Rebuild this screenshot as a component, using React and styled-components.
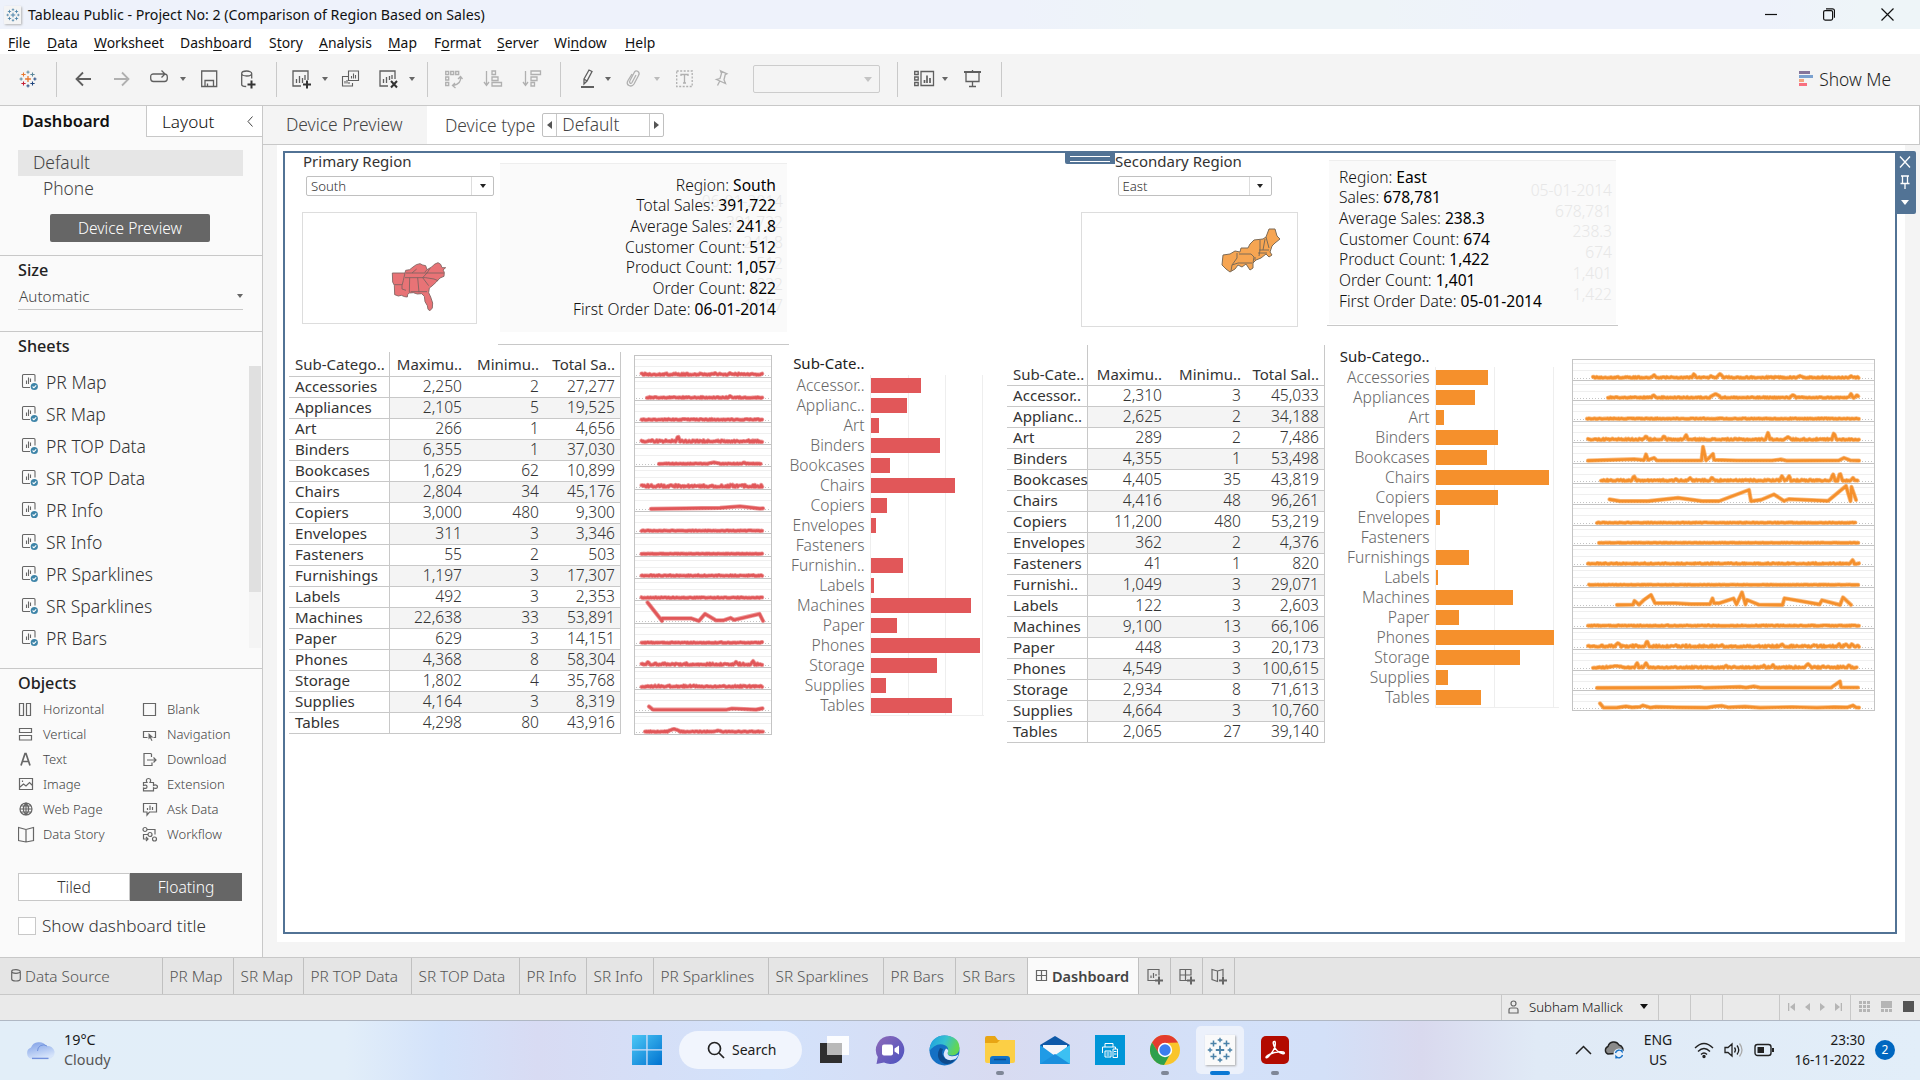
import React from "react";
import styled, { createGlobalStyle, css } from "styled-components";

const RED = "#e15759";
const ORANGE = "#f5902c";
const BLUE = "#527395";

const GlobalStyle = createGlobalStyle`
  * { box-sizing: border-box; }
  html, body { margin: 0; padding: 0; }
  body {
    width: 1920px; height: 1080px; overflow: hidden;
    font-family: "Noto Sans", "Open Sans", sans-serif;
    font-weight: 300; color: #333; background: #fff; white-space: nowrap;
  }
  svg { display: block; flex: none; }
`;

const Screen = styled.div`
  width: 1920px; height: 1080px; display: flex; flex-direction: column; overflow: hidden;
`;

/* ---------- window chrome ---------- */
const TitleBar = styled.header`
  height: 29px; display: flex; align-items: center; padding: 0 26px 0 4px; flex: none;
  background: linear-gradient(90deg, #eef2fb 0 53%, #eef4f8 60% 72%, #eef2fb 80% 92%, #eef5f8 97%);
`;
const AppTile = styled.span`
  width: 17px; height: 18px; display: grid; place-items: center; background: #f4f4f4;
  box-shadow: 1px 1px 2px #b5b5b5; margin-right: 7px;
`;
const WindowTitle = styled.h1`
  margin: 0; font-size: 14.2px; font-weight: 400; color: #111; flex: 1; line-height: 28px;
`;
const WindowButtons = styled.div`
  display: flex; gap: 46px; align-items: center;
`;
const MenuBar = styled.nav`
  height: 25px; display: flex; align-items: center; gap: 16px; padding: 2px 0 0 8px; background: #fff;
  font-size: 13.9px; font-weight: 400; color: #111; flex: none; line-height: 26px;
`;
const MenuItem = styled.span`
  width: ${(p) => p.$w}px;
  u { text-underline-offset: 2px; }
`;

/* ---------- toolbar ---------- */
const Toolbar = styled.div`
  height: 52px; display: flex; align-items: center; background: #f4f4f4; border-bottom: 1px solid #c8c8c8; flex: none;
  padding-bottom: 1px;
`;
const Tool = styled.span`
  width: ${(p) => p.$w}px; margin-left: ${(p) => p.$gap}px; height: 18px; color: #5f5f5f; flex: none;
  opacity: ${(p) => (p.$off ? 0.45 : 1)};
  svg { overflow: visible; fill: none; stroke: currentColor; stroke-width: 1.3; }
`;
const ToolRule = styled.span`
  width: 1px; height: 35px; background: #c9c9c9; margin-left: ${(p) => p.$gap}px; flex: none;
`;
const Caret = styled.span`
  width: 0; height: 0; flex: none; margin-left: ${(p) => p.$gap || 0}px;
  border: ${(p) => p.$s || 3}px solid transparent; border-top: ${(p) => (p.$s || 3) + 1}px solid ${(p) => p.$c || "#666"}; border-bottom: 0;
`;
const SearchCombo = styled.span`
  width: 127px; height: 28px; margin-left: 25px; border: 1px solid #ccc; border-radius: 2px; flex: none;
  display: flex; align-items: center; justify-content: flex-end; padding-right: 7px;
`;
const ShowMe = styled.span`
  margin-left: auto; margin-right: 29px; display: flex; gap: 6px; align-items: center; font-size: 17.4px; line-height: 22px; color: #222;
`;

/* ---------- body ---------- */
const Body = styled.div`
  height: 851px; display: flex; flex: none;
`;
const SidePanel = styled.aside`
  width: 263px; display: flex; flex-direction: column; background: #fafafa; border-right: 1px solid #c8c8c8; flex: none;
`;
const PanelTabs = styled.div`
  height: 31px; display: flex; flex: none;
`;
const PanelTab = styled.div`
  display: flex; align-items: center; justify-content: space-between; color: #111;
  ${(p) => p.$active
    ? css`width: 146px; padding-left: 22px; font-weight: 600; font-size: 16.5px; line-height: 28px; padding-bottom: 2px;`
    : css`flex: 1; padding: 1px 9px 0 15px; font-size: 17.2px; line-height: 30px; background: #fff; border: solid #c8c8c8; border-width: 0 0 1px 1px;`}
`;
const DeviceList = styled.div`
  height: 119px; padding: 13px 19px 0 18px; border-bottom: 1px solid #c8c8c8; font-size: 17.4px; flex: none; color: #444;
`;
const Device = styled.div`
  height: 26px; line-height: 25px; padding-left: ${(p) => (p.$active ? 15 : 25)}px;
  background: ${(p) => (p.$active ? "#e6e6e6" : "transparent")};
`;
const PreviewButton = styled.button`
  display: block; width: 160px; height: 28px; margin: 12px 0 0 32px; border: 0; border-radius: 2px; background: #666;
  color: #fff; font: 300 15.5px/27px "Noto Sans", sans-serif; padding: 0;
`;
const PanelSection = styled.section`
  height: ${(p) => p.$h}px; padding: 4px 19px 0 18px; flex: none;
  border-bottom: ${(p) => (p.$last ? 0 : 1)}px solid #c8c8c8;
`;
const SectionTitle = styled.h2`
  margin: 0; font-size: 16.2px; font-weight: 500; line-height: 20px; height: 20px; color: #222;
`;
const SizeSelect = styled.div`
  height: 30px; display: flex; align-items: center; justify-content: space-between; border-bottom: 1px solid #c8c8c8;
  font-size: 15.3px; padding-left: 1px; padding-top: 3px; color: #444;
`;
const SheetScroller = styled.div`
  display: flex; justify-content: space-between; margin: 10px -18px 0 3px; height: 282px;
`;
const SheetList = styled.ul`
  list-style: none; margin: 0; padding: 0;
`;
const SheetRow = styled.li`
  height: 32px; display: flex; align-items: center; gap: 8px; font-size: 17.55px; color: #333; line-height: 30px; padding-bottom: 1px;
`;
const ScrollTrack = styled.div`
  width: 12px; background: #f4f4f4;
`;
const ScrollThumb = styled.div`
  height: 226px; background: #e0e0e0;
`;
const ObjectGrid = styled.div`
  display: grid; grid-template-columns: 124px 1fr; grid-auto-rows: 25px; margin-top: 4px; font-size: 13.05px; color: #444;
`;
const ObjectItem = styled.div`
  display: flex; align-items: center; gap: 8px; line-height: 25px;
  svg { fill: none; stroke: #666; stroke-width: 1.2; }
`;
const LayoutToggle = styled.div`
  display: flex; width: 224px; height: 28px; margin-top: 26px; font-size: 15.6px; text-align: center; line-height: 27px;
`;
const ToggleHalf = styled.span`
  flex: 1; border: 1px solid ${(p) => (p.$on ? "#666" : "#c8c8c8")}; background: ${(p) => (p.$on ? "#666" : "#fff")};
  color: ${(p) => (p.$on ? "#fff" : "#333")};
`;
const TitleCheck = styled.label`
  display: flex; align-items: center; gap: 6px; margin-top: 12px; font-size: 17.15px; line-height: 26px; color: #333;
`;
const Box = styled.span`
  width: 18px; height: 18px; border: 1px solid #c8c8c8; background: #fff;
`;

const Workspace = styled.main`
  flex: 1; display: flex; flex-direction: column; background: #f4f4f4;
`;
const DeviceBar = styled.div`
  height: 39px; display: flex; align-items: center; background: #fff; border-bottom: 1px solid #c8c8c8;
  border-right: 1px solid #c8c8c8; font-size: 17.4px; color: #444; flex: none; line-height: 36px;
`;
const DevicePreviewTab = styled.span`
  width: 164px; height: 38px; background: #f4f4f4; padding-left: 23px; margin-right: 18px;
`;
const Stepper = styled.div`
  display: flex; width: 122px; height: 24px; margin-left: 7px; border: 1px solid #c0c0c0; border-radius: 2px; line-height: 20px;
`;
const StepButton = styled.span`
  width: 14px; display: grid; place-items: center; border: solid #c8c8c8; border-width: ${(p) => (p.$left ? "0 1px 0 0" : "0 0 0 1px")};
  &::before {
    content: ""; border: 4px solid transparent;
    ${(p) => (p.$left ? "border-left: 0; border-right: 5px solid #555;" : "border-right: 0; border-left: 5px solid #555;")}
  }
`;
const StepValue = styled.span`
  flex: 1; padding-left: 5px;
`;

const Page = styled.div`
  width: 1628px; height: 797px; margin-left: 14px; padding: 6px 8px 8px 6px; background: #fff;
`;
const Frame = styled.div`
  position: relative; width: 1614px; height: 783px; border: 2px solid ${BLUE}; display: flex;
`;
const Handle = styled.div`
  position: absolute; left: 780px; top: -1px; width: 50px; height: 12px; background: ${BLUE};
  display: flex; flex-direction: column; justify-content: center; gap: 4px; padding: 1px 5px 0;
  border-radius: 0 0 0 2px;
`;
const Grip = styled.i`
  height: 1px; background: #fff;
`;
const FrameActions = styled.div`
  position: absolute; right: -21px; top: -2px; width: 21px; height: 63px; background: ${BLUE};
  display: flex; flex-direction: column; align-items: center; padding: 4px 2px 0 0; gap: 6px; border-radius: 0 2px 2px 0;
  svg { fill: none; stroke: #fff; stroke-width: 1.3; }
`;

/* ---------- dashboard content ---------- */
const Region = styled.section`
  width: ${(p) => p.$w}px; flex: none; display: flex; flex-direction: column;
`;
const TopRow = styled.div`
  height: ${(p) => p.$h}px; padding-left: ${(p) => p.$left}px; display: flex; align-items: flex-start; flex: none;
`;
const FilterColumn = styled.div`
  width: ${(p) => p.$w}px; display: flex; flex-direction: column;
`;
const FilterTitle = styled.h3`
  margin: 0 0 5px; padding-left: ${(p) => p.$left}px; font-size: 15px; font-weight: 400; line-height: 16px; height: 18px; color: #333;
`;
const Filter = styled.div`
  width: ${(p) => p.$w}px; height: 20px; margin-left: ${(p) => p.$left}px; border: 1px solid #c0c0c0; border-radius: 2px; display: flex;
  justify-content: space-between; padding-left: 4px; font-size: 13.2px; line-height: 18px; color: #333;
`;
const FilterArrow = styled.span`
  width: 22px; border-left: 1px solid #ddd; display: grid; place-items: center;
`;
const MapBox = styled.div`
  width: ${(p) => p.$w}px; height: ${(p) => p.$h}px; margin-top: 16px; border: 1px solid #ddd;
  svg { margin: -1px; }
`;
const InfoWrap = styled.div`
  width: 291px; height: ${(p) => p.$h}px; margin: ${(p) => p.$top}px 0 0 ${(p) => p.$left}px; padding: 0 2px; border-bottom: 1px solid #c8c8c8;
`;
const InfoCard = styled.div`
  height: ${(p) => p.$h}px; background: #fafafa; position: relative; border-top: 1px solid #eee;
  padding: ${(p) => p.$pad}; text-align: ${(p) => p.$align}; font-size: 15.6px; line-height: 20.7px; color: #111;
  b { font-weight: 400; color: #000; }
`;
const Ghosts = styled.div`
  position: absolute; right: 4px; top: ${(p) => p.$top}px; text-align: right; color: #e7e7e7;
`;
const InfoLines = styled.div`
  position: relative;
`;
const BottomRow = styled.div`
  display: flex; align-items: flex-start; padding-left: ${(p) => p.$left}px;
`;

const Table = styled.div`
  width: ${(p) => p.$w}px; display: grid; grid-template-columns: ${(p) => p.$cols}; grid-template-rows: ${(p) => p.$head}px; grid-auto-rows: 21px;
  border-right: 1px solid #c8c8c8; font-size: 15.6px;
`;
const Cell = styled.span`
  border-bottom: 1px solid #c8c8c8; text-align: right; line-height: 19px; color: #333;
  background: ${(p) => (p.$shade ? "#f4f4f4" : "transparent")};
  padding-right: ${(p) => (p.$last ? 5 : 0)}px;
`;
const RowName = styled(Cell)`
  text-align: left; padding-left: 6px; border-right: 1px solid #c8c8c8; font-weight: 400; font-size: 15.1px; background: transparent;
`;
const HeadCell = styled(Cell)`
  font-weight: 400; font-size: 15px; display: flex; align-items: flex-end; justify-content: flex-end; line-height: 22px;
  padding-bottom: ${(p) => p.$lift}px;
`;
const HeadName = styled(HeadCell)`
  justify-content: flex-start; padding-left: 6px; border-right: 1px solid #c8c8c8;
`;

const BarChart = styled.div`
  margin-left: ${(p) => p.$left}px; display: flex; flex-direction: column; font-size: 15.6px;
`;
const BarHeader = styled.div`
  height: ${(p) => p.$h}px; width: ${(p) => p.$w}px; text-align: right; line-height: 23px; font-size: 15px; font-weight: 400; color: #222;
`;
const BarBody = styled.div`
  display: flex; gap: 5px;
`;
const BarLabels = styled.div`
  width: ${(p) => p.$w}px; padding-top: 1px; text-align: right; color: #666;
`;
const BarLabel = styled.div`
  height: 20px; line-height: 19px;
`;
const Plot = styled.div`
  width: ${(p) => p.$w}px; height: 341px; padding-top: 3px; border-bottom: 1px solid #eee;
  background:
    linear-gradient(#eee, #eee) 0 0 / 1px 100% no-repeat,
    linear-gradient(#eee, #eee) ${(p) => p.$lines[0]}px 0 / 1px 100% no-repeat,
    linear-gradient(#eee, #eee) ${(p) => p.$lines[1]}px 0 / 1px 100% no-repeat,
    linear-gradient(#eee, #eee) ${(p) => p.$lines[2]}px 0 / 1px 100% no-repeat;
  padding-left: 1px;
`;
const Bar = styled.div`
  height: 15px; margin-bottom: 5px; background: ${(p) => p.$color};
`;
const SparkBox = styled.div`
  margin: ${(p) => p.$top}px 0 0 ${(p) => p.$left}px;
`;

/* ---------- bottom strips ---------- */
const SheetTabs = styled.div`
  height: 38px; display: flex; background: #e5e5e5; border: solid #c8c8c8; border-width: 1px 0; flex: none;
  font-size: 15.35px; color: #555; line-height: 37px;
`;
const SheetTab = styled.div`
  width: ${(p) => p.$w}px; padding-left: ${(p) => (p.$icon ? 8 : 6.5)}px; border-right: 1px solid #c0c0c0; display: flex; align-items: center; gap: 5px;
  ${(p) => p.$source && css`padding-left: 11px; gap: 4px; svg { margin-top: -2px; }`}
  ${(p) => p.$active && css`background: #fafafa; font-weight: 600; font-size: 14.5px; color: #444; padding-left: 8px; line-height: 33px; svg { margin-top: -2px; }`}
  svg { fill: none; stroke: #666; stroke-width: 1.2; overflow: visible; }
`;
const StatusBar = styled.div`
  height: 26px; display: flex; justify-content: flex-end; background: #eaeaea; border-bottom: 1px solid #b0b8c4; flex: none;
`;
const StatusCell = styled.div`
  width: ${(p) => p.$w}px; border-left: 1px solid #c8c8c8; display: flex; align-items: center; gap: ${(p) => p.$gap || 0}px;
  padding: 0 0 2px ${(p) => p.$pad || 0}px; font-size: 13.2px; color: #111; line-height: 22px;
`;
const Taskbar = styled.footer`
  height: 60px; display: flex; align-items: center; flex: none; padding-bottom: 2px;
  background: linear-gradient(90deg, #e2eef8 0%, #e2eef9 18%, #d3e2fa 23%, #d8dbf3 28%, #d5dff7 34%, #d3e2fb 40%, #d8dbf1 52%, #d3e1f9 64%, #d3e0f8 69%, #d9d9ee 74%, #e0eaf6 80%, #e2eef9 100%);
  font-size: 13.5px; font-weight: 400; color: #1a1a1a; line-height: 20px;
`;
const Weather = styled.div`
  display: flex; align-items: center; gap: 9px; padding-left: 25px; width: 619px; font-size: 14.4px;
  span { color: #555; }
`;
const AppButton = styled.div`
  width: 55px; height: 60px; display: flex; align-items: center; justify-content: center; position: relative;
  &::after {
    content: ""; position: absolute; bottom: 5px; height: 4px; border-radius: 2px;
    width: ${(p) => (p.$mark === "active" ? 20 : p.$mark ? 8 : 0)}px;
    background: ${(p) => (p.$mark === "active" ? "#0a78d4" : "#7f8797")};
  }
`;
const SearchPill = styled.div`
  width: 123px; height: 38px; border-radius: 19px; background: #f1f5fd; display: flex; align-items: center; gap: 7px; padding-left: 28px;
  font-size: 14px; margin: 0 5px;
`;
const ActiveTile = styled.div`
  width: 48px; height: 48px; border-radius: 5px; background: #ecf1fb; display: grid; place-items: center;
`;
const WhiteTile = styled.div`
  width: 30px; height: 30px; background: #fafafa; display: grid; place-items: center; box-shadow: 1px 1px 2px #aaa;
`;
const Tray = styled.div`
  margin-left: auto; padding-right: 25px; display: flex; align-items: center; gap: 12px;
`;
const Lang = styled.div`
  width: 40px; margin: 0 4px 0 0; text-align: center; font-size: 14px;
`;
const TrayIcons = styled.div`
  display: flex; gap: 10px;
`;
const Clock = styled.div`
  width: 78px; text-align: right; margin-right: -2px;
`;
const Badge = styled.div`
  width: 20px; height: 20px; border-radius: 50%; background: #0067c0; color: #fff; text-align: center; line-height: 19px; font-size: 12px;
`;

/* ---------- data ---------- */
const NAMES = ["Accessories", "Appliances", "Art", "Binders", "Bookcases", "Chairs", "Copiers", "Envelopes", "Fasteners", "Furnishings", "Labels", "Machines", "Paper", "Phones", "Storage", "Supplies", "Tables"];
const withShort = (map) => NAMES.map((n) => map[n] || n);

const SOUTH_ROWS = [
  ["2,250", "2", "27,277"], ["2,105", "5", "19,525"], ["266", "1", "4,656"], ["6,355", "1", "37,030"], ["1,629", "62", "10,899"],
  ["2,804", "34", "45,176"], ["3,000", "480", "9,300"], ["311", "3", "3,346"], ["55", "2", "503"], ["1,197", "3", "17,307"],
  ["492", "3", "2,353"], ["22,638", "33", "53,891"], ["629", "3", "14,151"], ["4,368", "8", "58,304"], ["1,802", "4", "35,768"],
  ["4,164", "3", "8,319"], ["4,298", "80", "43,916"],
];
const EAST_ROWS = [
  ["2,310", "3", "45,033"], ["2,625", "2", "34,188"], ["289", "2", "7,486"], ["4,355", "1", "53,498"], ["4,405", "35", "43,819"],
  ["4,416", "48", "96,261"], ["11,200", "480", "53,219"], ["362", "2", "4,376"], ["41", "1", "820"], ["1,049", "3", "29,071"],
  ["122", "3", "2,603"], ["9,100", "13", "66,106"], ["448", "3", "20,173"], ["4,549", "3", "100,615"], ["2,934", "8", "71,613"],
  ["4,664", "3", "10,760"], ["2,065", "27", "39,140"],
];
const SOUTH_BARS = [50, 36, 8, 69, 19, 84, 16, 5, 0, 32, 3, 100, 26, 109, 66, 15, 81];
const EAST_BARS = [52, 39, 8, 62, 51, 113, 62, 4, 0, 33, 2, 77, 23, 118, 84, 12, 45];

/* s: first x, e: last x, n: jitter, k: spikes [x, height, half width], p: explicit points [x, height] */
const SOUTH_LINES = [
  { s: 7.5, e: 129, n: 0.8, k: [[81, 2], [96, 2]] }, { s: 13, e: 129, n: 0.5, k: [[96, 2]] }, { s: 7.5, e: 129, n: 0.5 },
  { s: 7.5, e: 129, n: 0.9, k: [[18, 2], [44, 6, 1.5]] }, { s: 25, e: 127, n: 0.3, k: [[80, 1.5, 6], [110, 1.5]] },
  { s: 7.5, e: 129, n: 1.1, k: [[8, 2], [37, 2], [108, 2]] },
  { p: [[17, 0], [86, 1], [106, 2.6], [126, 0.3], [129, 0.6]] }, { s: 7.5, e: 129, n: 0.3 }, { s: 7.5, e: 129, n: 0.2 },
  { s: 7.5, e: 129, n: 0.5 }, { s: 7.5, e: 129, n: 0.4 },
  { p: [[13.5, 18.5], [28, 0], [28.3, 2.5], [57.5, 2.5], [65, 0], [71, 7], [82, 0.5], [89, 0.5], [96.5, 3], [100, 1], [125.5, 7], [129, 0]] },
  { s: 7.5, e: 129, n: 0.4 }, { s: 7.5, e: 129, n: 0.9, k: [[14, 3], [102, 3], [119, 4]] }, { s: 7.5, e: 129, n: 0.8 },
  { p: [[15, 3.4], [19, 0.2], [92, 0.2], [98, 1.4], [122, 0.3], [128.5, 1.5]] },
  { s: 11, e: 129, n: 0.4, k: [[40, 3, 6], [84, 1.4, 4]] },
];
const EAST_LINES = [
  { s: 21, e: 287, n: 0.6, k: [[82, 3], [122, 4], [139, 2], [148, 4, 3], [228, 2, 3], [279, 2]] },
  { s: 36, e: 287, n: 0.5, k: [[81.5, 3], [143.5, 4, 5], [221, 3, 3], [279, 4], [285, 3]] },
  { s: 15, e: 287, n: 0.4 },
  { s: 16, e: 287, n: 0.7, k: [[74, 4], [92, 4], [114, 5], [196, 7], [216, 3, 3], [262, 7]] },
  { p: [[16, 0.3], [62, 1.7], [72, 0.8], [74, 6.5], [76, 1], [82, 3], [85, 0.4], [129.5, 0.4], [131, 14], [134, 0.5], [137, 3], [141, 7], [142, 1], [165, 0.4], [200, 0.4], [209, 1.5], [215, 0.2], [267, 0.5], [272, 3], [278, 0.6], [287, 0.3]] },
  { s: 29, e: 286, n: 0.7, k: [[62, 5], [104, 2], [118, 3], [140, 3.5], [210, 5], [217, 5], [261, 7], [268, 8], [281, 3]] },
  { p: [[37.5, 2.5], [48, 0.8], [76, 0.8], [106, 4], [130, 0.8], [147, 0.8], [177, 12], [179, 0.8], [189, 2], [202, 7.5], [212, 1], [217, 2.8], [256, 1], [274, 16], [278.5, 0.8], [279.5, 15], [284, 2]] },
  { s: 25, e: 284, n: 0.3 }, { s: 27, e: 287, n: 0.2 }, { s: 16, e: 287, n: 0.5, k: [[280.5, 4]] }, { s: 17, e: 287, n: 0.2 },
  { p: [[45, 0], [61, 0.3], [62.5, 4], [67, 0.3], [72, 5], [79, 10], [83, 1.7], [103, 1.7], [119, 0.8], [138, 0.8], [140.5, 6.5], [142, 1.7], [147, 1.7], [161.5, 6.5], [164.5, 0.5], [170, 12.5], [173.5, 0.5], [175, 5], [187, 0.2], [210.5, 0], [212.5, 6.7], [247.5, 0.5], [250, 4.7], [268, 0], [271, 7.5], [279, 0]] },
  { s: 16, e: 287, n: 0.4 },
  { s: 16, e: 287, n: 0.9, k: [[46, 4, 3], [64, 2], [75, 6], [104, 2], [150, 2], [210, 3], [242, 2], [267, 3], [274, 3], [280, 3]] },
  { s: 21, e: 285, n: 0.8, k: [[44, 2, 8], [65, 5], [74, 5, 2], [154, 2.5], [192, 2.5], [201, 3], [236, 4, 3], [251, 2], [277, 3]] },
  { p: [[25, 0], [100, 0.3], [128, 0.9], [132, 0.1], [168, 1], [174, 0.3], [182, 1.5], [188, 0.3], [259, 0.2], [268, 6.5], [269, 0.5], [286, 0.4]] },
  { p: [[28, 4.5], [31.5, 0.2], [45, 0.3], [54, 1.5], [60, 0.5], [68, 1], [71, 2.5], [78, 0.3], [84, 1], [105, 0.5], [135, 0.3], [143, 1.5], [150, 2], [156, 0.6], [173, 1.3], [188, 0.2], [220, 0.9], [245, 0.2], [262, 0.8], [275, 0.5], [281, 2.5], [284, 0.5], [287, 0.3]] },
];

function linePoints(row, seed) {
  if (row.p) return row.p;
  const pts = [];
  let r = seed * 7919 + 13;
  for (let x = row.s; x <= row.e; x += 0.9) {
    r = (r * 1103515245 + 12345) % 2147483648;
    const t = r / 2147483648;
    let h = t * t * row.n * 1.9;
    (row.k || []).forEach(([kx, kh, half = 1.8]) => {
      const d = Math.abs(x - kx);
      if (d < half) h = Math.max(h, kh * (1 - (d / half) * 0.7));
    });
    pts.push([x, h]);
  }
  return pts;
}

function Sparklines({ rows, width, edges, color }) {
  const total = edges[edges.length - 1];
  return (
    <svg width={width} height={total + 1}>
      {rows.map((row, i) => {
        const top = edges[i];
        const base = edges[i + 1];
        const pts = linePoints(row, i + 1).map(([x, h]) => `${x.toFixed(1)},${(base - 2.1 - h).toFixed(1)}`).join(" ");
        return (
          <g key={i}>
            <path d={`M1 ${top + 4.5}H${width - 1}M1 ${top + 11.5}H${width - 1}`} stroke="#efefef" />
            <path d={`M2 ${base - 1.5}H${width - 1}`} stroke="#c4c4c4" strokeDasharray="1 2" />
            <path d={`M0 ${base + 0.5}H${width}`} stroke="#c4c4c4" />
            <polyline points={pts} fill="none" stroke={color} strokeOpacity="0.6" strokeWidth="4.2" strokeLinejoin="round" strokeLinecap="round" />
            <polyline points={pts} fill="none" stroke={color} strokeWidth="2.6" strokeLinejoin="round" strokeLinecap="round" />
          </g>
        );
      })}
      <rect x="0.5" y="0.5" width={width - 1} height={total} fill="none" stroke="#c4c4c4" />
    </svg>
  );
}
const SOUTH_EDGES = [0, 22, 45, 67, 89, 111, 134, 156, 178, 201, 223, 245, 268, 290, 312, 334, 357, 379];
const EAST_EDGES = [0, 21, 41, 62, 83, 104, 124, 145, 166, 186, 207, 228, 248, 269, 290, 311, 331, 351];

function DataTable({ width, cols, head, lift, titles, names, rows }) {
  return (
    <Table $w={width} $cols={cols} $head={head}>
      <HeadName $lift={lift}>{titles[0]}</HeadName>
      <HeadCell $lift={lift}>{titles[1]}</HeadCell>
      <HeadCell $lift={lift}>{titles[2]}</HeadCell>
      <HeadCell $lift={lift} $last>{titles[3]}</HeadCell>
      {rows.map((r, i) => (
        <React.Fragment key={i}>
          <RowName>{names[i]}</RowName>
          <Cell $shade={i % 2}>{r[0]}</Cell>
          <Cell $shade={i % 2}>{r[1]}</Cell>
          <Cell $shade={i % 2} $last>{r[2]}</Cell>
        </React.Fragment>
      ))}
    </Table>
  );
}

function Bars({ left, headHeight, labelWidth, title, names, values, width, lines, color }) {
  return (
    <BarChart $left={left}>
      <BarHeader $h={headHeight} $w={labelWidth}>{title}</BarHeader>
      <BarBody>
        <BarLabels $w={labelWidth}>{names.map((n) => <BarLabel key={n}>{n}</BarLabel>)}</BarLabels>
        <Plot $w={width} $lines={lines}>
          {values.map((v, i) => <Bar key={i} $color={color} style={{ width: v }} />)}
        </Plot>
      </BarBody>
    </BarChart>
  );
}

function Info({ lines, ghosts, align, top, left, height, cardHeight, pad, ghostTop }) {
  return (
    <InfoWrap $h={height} $top={top} $left={left}>
      <InfoCard $h={cardHeight} $pad={pad} $align={align}>
        <Ghosts $top={ghostTop}>{ghosts.map((g) => <div key={g}>{g}</div>)}</Ghosts>
        <InfoLines>{lines.map(([k, v]) => <div key={k}>{k}: <b>{v}</b></div>)}</InfoLines>
      </InfoCard>
    </InfoWrap>
  );
}

/* ---------- icons ---------- */
function TableauMark({ size, mono }) {
  const c = mono ? ["#4b82a8", "#4b82a8", "#4b82a8", "#4b82a8"] : ["#e8762c", "#c72035", "#5b879b", "#1f447e"];
  const plus = (x, y, r, col, w) => <path key={`${x},${y}`} d={`M${x - r} ${y}h${r * 2}M${x} ${y - r}v${r * 2}`} stroke={col} strokeWidth={w} />;
  return (
    <svg width={size} height={size} viewBox="0 0 34 34" fill="none">
      {plus(17, 17, 5.5, c[0], 2.4)}
      {plus(17, 4, 3, c[2], 1.8)}{plus(17, 30, 3, c[3], 1.8)}{plus(4, 17, 3, c[2], 1.8)}{plus(30, 17, 3, c[3], 1.8)}
      {plus(8.5, 8.5, 4, c[0], 2)}{plus(25.5, 8.5, 4, c[2], 2)}{plus(8.5, 25.5, 4, c[1], 2)}{plus(25.5, 25.5, 4, c[3], 2)}
    </svg>
  );
}
const Ico = ({ w = 17, h = 18, d, children }) => (
  <svg width={w} height={h} viewBox={`0 0 ${w} ${h}`} fill="none">{d && <path d={d} />}{children}</svg>
);
const SheetIcon = () => (
  <svg width="17" height="18" viewBox="0 0 17 18" fill="none" stroke="#666" strokeWidth="1.1">
    <path d="M9 14.5H2.5a1 1 0 0 1-1-1v-11a1 1 0 0 1 1-1h10.500a1 1 0 0 1 1 1v6M5.500 11V7.500M7.500 11V4.500M9.500 9V5.500" />
    <circle cx="13.300" cy="13.500" r="3.600" fill="#3d84a8" stroke="none" />
    <path d="M11.600 13.500l1.300 1.300 2.300-2.500" stroke="#fff" />
  </svg>
);

const OBJECTS = [
  ["Horizontal", <Ico key="i" d="M1.500 2.500h4v12h-4zM8.500 2.500h4v12h-4z" />],
  ["Blank", <Ico key="i" d="M1.500 2.500h12v12h-12z" />],
  ["Vertical", <Ico key="i" d="M1.500 2.500h12v4h-12zM1.500 9.500h12v4.500h-12z" />],
  ["Navigation", <Ico key="i" d="M5.500 11.500h-4v-6h12v6h-2"><path d="M6.500 7l5 4.500h-2.500l1.500 3-1 .500-1.500-3-1.500 1.500z" fill="#666" stroke="none" /></Ico>],
  ["Text", <Ico key="i"><path d="M3 14.500L7 2.500h1L12 14.500M4.500 10.500h6" strokeWidth="1.700" /></Ico>],
  ["Download", <Ico key="i" d="M9.500 6V3l-1-.500h-6.500v12h8v-3M5 9h9M11.500 6.500L14 9l-2.500 2.500" />],
  ["Image", <Ico key="i" d="M1.500 2.500h13v11h-13zM2 11l3.500-3 2.500 2 3.500-3.500 3 3M4.500 4.500v1.500" />],
  ["Extension", <Ico key="i" d="M1.500 8v-1.500h3.500c-1-1.500-1-4 1.500-4s2.500 2.500 1.500 4h3.500v3c1.500-1 4-.500 4 1.300s-2.500 2-4 1v3h-10v-2.800c1.500.800 3.500.500 3.500-1.300s-2-2-3.500-1.200z" />],
  ["Web Page", <Ico key="i" d="M14 8a6 6 0 1 1-12 0a6 6 0 1 1 12 0zM2 8h12M8 2v12M3 5h10M3 11h10M8 2q-5.500 6 0 12q5.500-6 0-12" />],
  ["Ask Data", <Ico key="i" d="M1.500 2.500h13v8.500h-7l-2.500 3v-3h-3.500zM5.500 9v-2M8 9v-4.500M10.500 9v-3" />],
  ["Data Story", <Ico key="i" d="M8 3.500L.500 1.500v13L8 16l7.500-1.500v-13zM8 3.500v12.500" />],
  ["Workflow", <Ico key="i" d="M1 3.500a2 2 0 1 1 4 0a2 2 0 1 1-4 0M5 3.500h8v5M6 8.500a2 2 0 1 1 4 0a2 2 0 1 1-4 0M6 8.500h-4.500v4.500h5M4 11l2 2-2 2M10.500 13a2 2 0 1 1 4 0a2 2 0 1 1-4 0" />],
];

const MENU = [["", "F", "ile", 23], ["", "D", "ata", 31], ["", "W", "orksheet", 70], ["Dash", "b", "oard", 73], ["S", "t", "ory", 34], ["", "A", "nalysis", 53], ["", "M", "ap", 30], ["F", "o", "rmat", 47], ["", "S", "erver", 41], ["Wi", "n", "dow", 55], ["", "H", "elp", 32]];
const SHEETS = ["PR Map", "SR Map", "PR TOP Data", "SR TOP Data", "PR Info", "SR Info", "PR Sparklines", "SR Sparklines", "PR Bars"];
const TABS = [["PR Map", 71], ["SR Map", 70], ["PR TOP Data", 108], ["SR TOP Data", 108], ["PR Info", 67], ["SR Info", 67], ["PR Sparklines", 115], ["SR Sparklines", 115], ["PR Bars", 72], ["SR Bars", 72]];

function SouthMap() {
  return (
    <svg width="175" height="112" viewBox="66 215 525 336">
      <g fill="#e87376" stroke="#7d6260" strokeWidth="2.600" strokeLinejoin="round">
        <path d="M337 398H375L377 390 389 388 399 380 409 373 420 370 428 374 437 376 441 388 455 380 463 372 474 367 482 372 486 382 497 382 489 389 493 396 492 408 480 413 469 425 456 437 448 443 446 457 452 470 458 488 457 503 450 511 444 507 442 496 435 484 433 468 425 460 412 461 400 457 388 458 383 462 382 470 374 469 364 465 355 467 344 463 343 435 338 425Z" />
        <path d="M343 433H366M375 412H437M378 398H492M389 412L388 456M413 412L417 456M392 454H441M428 412L446 436M441 398L428 412M437 412L462 416 474 421M441 388L434 396M450 384L441 398M375 398L370 420 366 436V446L378 450M396 398L410 386" fill="none" />
      </g>
    </svg>
  );
}
function EastMap() {
  return (
    <svg width="217" height="115" viewBox="0 0 217 115">
      <g fill="#f6a552" stroke="#7d6b56" strokeWidth="1" strokeLinejoin="round">
        <path d="M142 43L149 42 154 39 159 40 160 36 167 36 169 32 173 28 182 27 185 25 188 17 194 17 196 24 199 27 194 31 191 34 189 40 191 43 188 45 185 42 180 46 175 48 172 51 172 56 169 58 165 52 161 55 157 53 154 57 149 60 145 57 141 53Z" />
        <path d="M156 41V46L151 53 150 59M158 42H170L173 45 172 51M157 51H171M174 45V48M179 28V38L178 44M184 27L182 38M178 38H188M185 25L188 36M151 53L157 51M177 41H186" fill="none" />
      </g>
    </svg>
  );
}

export default function App() {
  return (
    <Screen>
      <GlobalStyle />
      <TitleBar>
        <AppTile><TableauMark size={14} mono /></AppTile>
        <WindowTitle>Tableau Public - Project No: 2 (Comparison of Region Based on Sales)</WindowTitle>
        <WindowButtons>
          <svg width="12" height="12" stroke="#111" strokeWidth="1.200"><path d="M0 5.500h12" /></svg>
          <svg width="12" height="13" stroke="#111" strokeWidth="1.200" fill="none"><rect x=".600" y="2.600" width="9" height="9.500" rx="1.500" /><path d="M3 .800h6.500q2 0 2 2v7" /></svg>
          <svg width="13" height="13" stroke="#111" strokeWidth="1.200"><path d="M.500 .500l12 12M12.500 .500l-12 12" /></svg>
        </WindowButtons>
      </TitleBar>
      <MenuBar>{MENU.map(([a, u, b, w]) => <MenuItem key={a + u + b} $w={w}>{a}<u>{u}</u>{b}</MenuItem>)}</MenuBar>
      <Toolbar>
        <Tool $gap={19} $w={17}><TableauMark size={18} /></Tool>
        <ToolRule $gap={20} />
        <Tool $gap={18} $w={16}><svg width="16" height="18"><path d="M16 9H1M8 2.500L1.500 9 8 15.500" strokeWidth="1.800" /></svg></Tool>
        <Tool $gap={23} $w={16} $off><svg width="16" height="18"><path d="M0 9h15M8 2.500L14.500 9 8 15.500" strokeWidth="1.800" /></svg></Tool>
        <Tool $gap={20} $w={18}><svg width="18" height="18"><path d="M7 4H3.500Q.700 4 .700 6.500v2Q.700 11.500 3.500 11.500h11q2.800 0 2.800-3v-1.500Q17.300 4 14.500 4H5M11.500 .500L15 4 11.500 7.500" /></svg></Tool>
        <Caret $gap={12} />
        <Tool $gap={15} $w={16}><svg width="16" height="18"><path d="M.700 1h15v15.500h-15zM4 16.500v-6h8.500v6M6.500 16v-2.500" /></svg></Tool>
        <Tool $gap={24} $w={14}><svg width="14" height="18"><path d="M.700 3.500v11q0 2 4.500 2M10.700 3.500v5M.700 3.500a5 2.500 0 1 1 10 0a5 2.500 0 1 1-10 0" /><path d="M6.500 14.500h8M10.500 10.500v8" stroke="#333" strokeWidth="2" /></svg></Tool>
        <ToolRule $gap={21} />
        <Tool $gap={15} $w={19}><svg width="19" height="18"><path d="M9 16H1V1h15v9M4.500 13V9M7.500 13V6M10.500 13V8M13 10V5" /><path d="M11 14.500h8M15 10.500v8" stroke="#333" strokeWidth="2" /></svg></Tool>
        <Caret $gap={11} />
        <Tool $gap={14} $w={17}><svg width="17" height="18"><path d="M6.500 10.500V1h10v9.500zM9.500 8.500V6M11.500 8.500V3.500M13.500 8.500V5M6.500 6.500h-6V16h10v-3M3 13.500V11M5 13.500V10M7 14v-2" strokeWidth="1.100" /></svg></Tool>
        <Tool $gap={20} $w={19}><svg width="19" height="18"><path d="M9 16H1V1h15v8M4.500 13V9M7.500 13V7M10.500 10V6M13 9V5" /><path d="M12 11l6 6.500M18 11l-6 6.500" stroke="#333" strokeWidth="2" /></svg></Tool>
        <Caret $gap={11} />
        <ToolRule $gap={12} />
        <Tool $gap={17} $w={17} $off><svg width="17" height="18"><path d="M.700 1.500h3v3h-3zM5.700 1.500h3v3h-3zM10.700 1.500h3v3h-3zM.700 7h3v3h-3zM.700 12.500h3v3h-3zM15.500 7q1 7-7.500 8.500M13 9l2.500-2.500L17.500 9M10 13l-2.500 2.500 3 2.500" /></svg></Tool>
        <Tool $gap={22} $w={18} $off><svg width="18" height="18"><path d="M2.500 1v14M0 12l2.500 3.500L5 12M8 1h3.500v3.500H8zM8 7h6v3.500H8zM8 12.500h9.500V16H8z" /></svg></Tool>
        <Tool $gap={21} $w={18} $off><svg width="18" height="18"><path d="M2.500 1v14M0 12l2.500 3.500L5 12M8 1h9.500v3.500H8zM8 7h6v3.500H8zM8 12.500h3.500V16H8z" /></svg></Tool>
        <ToolRule $gap={19} />
        <Tool $gap={20} $w={13}><svg width="13" height="18"><path d="M3 9L8 0l3 1.500-5 9.500-3 3zM3 9l3 2" /><path d="M0 17h13" strokeWidth="2" /></svg></Tool>
        <Caret $gap={11} />
        <Tool $gap={16} $w={12} $off><svg width="12" height="18"><path d="M9 5L5 12.500q-1 1.500-2 .500t0-2.500L7.500 2q1.500-2 3.500-.500t.500 4L7 14q-2 3-5 1.500t-1-5L5 4" /></svg></Tool>
        <Caret $gap={15} $c="#bbb" />
        <Tool $gap={16} $w={17} $off><svg width="17" height="18"><path d="M.700 1h15.500v15.500H.700z" strokeDasharray="2 1.500" /><path d="M5 6V4.500h7V6M8.500 4.500v8.500M7 13h3" /></svg></Tool>
        <Tool $gap={22} $w={13} $off><svg width="13" height="18"><path d="M5.500 .800l6.500 3-1.800 1-1.200 5 1.500 3.700-9-4 3.500-1L6.500 3.500zM4.800 11L2.500 15.500" /></svg></Tool>
        <SearchCombo><Caret $s={4} $c="#c4c4c4" /></SearchCombo>
        <ToolRule $gap={17} />
        <Tool $gap={16} $w={20}><svg width="20" height="18"><path d="M.700 1.500h3.500v3H.700zM.700 7h3.500v3H.700zM.700 12.500h3.500v3H.700zM7 1.500h12.500v14H7z" /><path d="M10.500 13v-3M13 13V5.500M16 13V8" strokeWidth="1.700" /></svg></Tool>
        <Caret $gap={8} />
        <Tool $gap={16} $w={17}><svg width="17" height="18"><path d="M0 2h17" strokeWidth="2" /><path d="M8.500 0v2M2 2v9.500h13V2M8.500 11.500V17M5 16.500h7" /></svg></Tool>
        <ToolRule $gap={20} />
        <ShowMe>
          <svg width="14" height="16"><path d="M0 0h11v3H0z" fill="#86759a" /><path d="M0 4h14v3H0z" fill="#7ba1cf" /><path d="M0 8h5v3H0z" fill="#f2a57f" /><path d="M0 12h8v3H0z" fill="#f86f7f" /></svg>
          Show Me
        </ShowMe>
      </Toolbar>

      <Body>
        <SidePanel>
          <PanelTabs>
            <PanelTab $active>Dashboard</PanelTab>
            <PanelTab>Layout<svg width="6" height="11" fill="none" stroke="#444"><path d="M5.500 .500L1 5.500l4.500 5" /></svg></PanelTab>
          </PanelTabs>
          <DeviceList>
            <Device $active>Default</Device>
            <Device>Phone</Device>
            <PreviewButton>Device Preview</PreviewButton>
          </DeviceList>
          <PanelSection $h={76}>
            <SectionTitle>Size</SectionTitle>
            <SizeSelect>Automatic<Caret $s={3.5} /></SizeSelect>
          </PanelSection>
          <PanelSection $h={337}>
            <SectionTitle>Sheets</SectionTitle>
            <SheetScroller>
              <SheetList>{SHEETS.map((s) => <SheetRow key={s}><SheetIcon />{s}</SheetRow>)}</SheetList>
              <ScrollTrack><ScrollThumb /></ScrollTrack>
            </SheetScroller>
          </PanelSection>
          <PanelSection $h={288} $last>
            <SectionTitle>Objects</SectionTitle>
            <ObjectGrid>{OBJECTS.map(([n, icon]) => <ObjectItem key={n}>{icon}{n}</ObjectItem>)}</ObjectGrid>
            <LayoutToggle><ToggleHalf>Tiled</ToggleHalf><ToggleHalf $on>Floating</ToggleHalf></LayoutToggle>
            <TitleCheck><Box />Show dashboard title</TitleCheck>
          </PanelSection>
        </SidePanel>

        <Workspace>
          <DeviceBar>
            <DevicePreviewTab>Device Preview</DevicePreviewTab>
            Device type
            <Stepper><StepButton $left /><StepValue>Default</StepValue><StepButton /></Stepper>
          </DeviceBar>
          <Page>
            <Frame>
              <Region $w={722}>
                <TopRow $h={199} $left={17}>
                  <FilterColumn $w={175}>
                    <FilterTitle $left={1}>Primary Region</FilterTitle>
                    <Filter $w={188} $left={4}>South<FilterArrow><Caret $s={3.5} $c="#222" /></FilterArrow></Filter>
                    <MapBox $w={175} $h={112}><SouthMap /></MapBox>
                  </FilterColumn>
                  <Info
                    align="right" top={10} left={21} height={182} cardHeight={169} pad="10.5px 11px 0 0" ghostTop={27}
                    lines={[["Region", "South"], ["Total Sales", "391,722"], ["Average Sales", "241.8"], ["Customer Count", "512"], ["Product Count", "1,057"], ["Order Count", "822"], ["First Order Date", "06-01-2014"]]}
                    ghosts={["06-01-2014", "391,722", "241.8", "512", "822", "1,057"]}
                  />
                </TopRow>
                <BottomRow $left={4}>
                  <DataTable width={332} cols="101px 72px 77px 81px" head={25} lift={1} titles={["Sub-Catego..", "Maximu..", "Minimu..", "Total Sa.."]} names={NAMES} rows={SOUTH_ROWS} />
                  <SparkBox $top={3} $left={13}><Sparklines rows={SOUTH_LINES} width={138} edges={SOUTH_EDGES} color={RED} /></SparkBox>
                  <Bars
                    left={13} headHeight={23} labelWidth={79.5} title="Sub-Cate.." values={SOUTH_BARS} width={114} lines={[38, 75, 112]} color={RED}
                    names={withShort({ Accessories: "Accessor..", Appliances: "Applianc..", Furnishings: "Furnishin.." })}
                  />
                </BottomRow>
              </Region>
              <Region $w={888}>
                <TopRow $h={192} $left={74}>
                  <FilterColumn $w={217}>
                    <FilterTitle $left={34}>Secondary Region</FilterTitle>
                    <Filter $w={154} $left={36.5}>East<FilterArrow><Caret $s={3.5} $c="#222" /></FilterArrow></Filter>
                    <MapBox $w={217} $h={115}><EastMap /></MapBox>
                  </FilterColumn>
                  <Info
                    align="left" top={7} left={29} height={166} cardHeight={164} pad="5.500px 0 0 10px" ghostTop={19}
                    lines={[["Region", "East"], ["Sales", "678,781"], ["Average Sales", "238.3"], ["Customer Count", "674"], ["Product Count", "1,422"], ["Order Count", "1,401"], ["First Order Date", "05-01-2014"]]}
                    ghosts={["05-01-2014", "678,781", "238.3", "674", "1,401", "1,422"]}
                  />
                </TopRow>
                <BottomRow $left={0}>
                  <DataTable
                    width={318} cols="81px 74px 79px 83px" head={41} lift={0} titles={["Sub-Cate..", "Maximu..", "Minimu..", "Total Sal.."]} rows={EAST_ROWS}
                    names={withShort({ Accessories: "Accessor..", Appliances: "Applianc..", Furnishings: "Furnishi.." })}
                  />
                  <Bars left={12} headHeight={22} labelWidth={92.5} title="Sub-Catego.." values={EAST_BARS} width={124} lines={[59, 118, 118]} color={ORANGE} names={NAMES} />
                  <SparkBox $top={14} $left={13.5}><Sparklines rows={EAST_LINES} width={303} edges={EAST_EDGES} color={ORANGE} /></SparkBox>
                </BottomRow>
              </Region>
              <Handle><Grip /><Grip /></Handle>
              <FrameActions>
                <svg width="12" height="14"><path d="M1 1.500l10 11M11 1.500l-10 11" /></svg>
                <svg width="12" height="19"><path d="M2 1h8M3.500 1v7M8.500 1v7M1.500 8.500h9M6 8.500V14" /></svg>
                <Caret $s={4} $c="#fff" />
              </FrameActions>
            </Frame>
          </Page>
        </Workspace>
      </Body>

      <SheetTabs>
        <SheetTab $w={163} $source><svg width="10" height="13"><path d="M.700 2.500v7.500q0 2 4.300 2t4.300-2V2.500M.700 2.500a4.300 1.800 0 1 1 8.600 0a4.300 1.800 0 1 1-8.600 0" /></svg>Data Source</SheetTab>
        {TABS.map(([t, w]) => <SheetTab key={t} $w={w}>{t}</SheetTab>)}
        <SheetTab $w={111} $active><svg width="11" height="11"><path d="M.500 .500h10v10H.500zM5.500 .500v10M.500 5.500h10" /></svg>Dashboard</SheetTab>
        <SheetTab $w={32} $icon><svg width="16" height="16"><path d="M8 12.500H1V1.500h11v6M4 10V7.500M6.500 10V5M9 8V6" /><path d="M8 12.500h8M12 8.500v8" strokeWidth="2" /></svg></SheetTab>
        <SheetTab $w={32} $icon><svg width="16" height="16"><path d="M8 12.500H1V1.500h11v6M6.500 1.500v11M1 7h11" /><path d="M8 12.500h8M12 8.500v8" strokeWidth="2" /></svg></SheetTab>
        <SheetTab $w={32} $icon><svg width="16" height="16"><path d="M6.500 3L1 1.500v10l5.500 2zM6.500 3L12 1.500V8M6.500 3v10.500" /><path d="M8 12.500h8M12 8.500v8" strokeWidth="2" /></svg></SheetTab>
      </SheetTabs>
      <StatusBar>
        <StatusCell $w={157} $pad={6} $gap={10}>
          <svg width="11" height="14" fill="none" stroke="#666" strokeWidth="1.200"><circle cx="5.500" cy="3.500" r="2.500" /><path d="M1 13v-3q0-2 2-2h5q2 0 2 2v3z" /></svg>
          Subham Mallick<Caret $gap={7} $s={4} $c="#111" />
        </StatusCell>
        <StatusCell $w={32} /><StatusCell $w={32} /><StatusCell $w={57} />
        <StatusCell $w={71} $pad={8} $gap={10}>
          <svg width="7" height="8" fill="#b5b5b5"><path d="M0 0h1.300v8H0zM7 0v8L2 4z" /></svg>
          <svg width="5" height="8" fill="#b5b5b5"><path d="M5 0v8L0 4z" /></svg>
          <svg width="5" height="8" fill="#b5b5b5"><path d="M0 0v8l5-4z" /></svg>
          <svg width="7" height="8" fill="#b5b5b5"><path d="M5.700 0H7v8H5.700zM0 0v8l5-4z" /></svg>
        </StatusCell>
        <StatusCell $w={70} $pad={8} $gap={11}>
          <svg width="11" height="11" fill="#b5b5b5"><path d="M0 0h3v3H0zM4 0h3v3H4zM8 0h3v3H8zM0 4h3v3H0zM4 4h3v3H4zM8 4h3v3H8zM0 8h3v3H0zM4 8h3v3H4zM8 8h3v3H8z" /></svg>
          <svg width="11" height="11" fill="#b5b5b5"><path d="M0 0h11v7H0zM0 8h3v3H0zM4 8h3v3H4zM8 8h3v3H8z" /></svg>
          <svg width="11" height="11" fill="#555"><path d="M0 0h11v11H0z" /></svg>
        </StatusCell>
      </StatusBar>

      <Taskbar>
        <Weather>
          <svg width="30" height="20" viewBox="0 0 30 20">
            <defs><linearGradient id="cloud" x1="0" y1="0" x2="0.400" y2="1"><stop offset="0" stopColor="#7f9fe6" /><stop offset=".500" stopColor="#a9c1f0" /><stop offset="1" stopColor="#d6e4fa" /></linearGradient></defs>
            <path d="M7 19a6 6 0 0 1-1-11.500A8.500 7.500 0 0 1 21.500 6a7 6.500 0 0 1 2 13z" fill="url(#cloud)" />
            <path d="M7 18.400h16.500" stroke="#7391dd" strokeWidth="1.400" />
            <path d="M12.500 11a6 6 0 0 1 9.500-5" stroke="#6f92de" strokeWidth="1" fill="none" />
          </svg>
          <div>19°C<br /><span>Cloudy</span></div>
        </Weather>
        <AppButton>
          <svg width="30" height="30"><defs><linearGradient id="win" x1="0" y1="0" x2="1" y2="1"><stop offset="0" stopColor="#4cc8f6" /><stop offset="1" stopColor="#0072d0" /></linearGradient></defs><path d="M0 0h14.300v14.300H0zM15.600 0H30v14.300H15.600zM0 15.600h14.300V30H0zM15.600 15.600H30V30H15.600z" fill="url(#win)" /></svg>
        </AppButton>
        <SearchPill><svg width="18" height="18" fill="none" stroke="#222" strokeWidth="1.700"><circle cx="7.500" cy="7.500" r="6" /><path d="M12 12l5 5" /></svg>Search</SearchPill>
        <AppButton><svg width="30" height="30"><path d="M0 8h22v20H0z" fill="#2f2f2f" /><path d="M7 1h22v19H7z" fill="#fff" fillOpacity=".930" /><path d="M7 8h15v12H7z" fill="#b9b9b9" /></svg></AppButton>
        <AppButton>
          <svg width="30" height="30"><defs><linearGradient id="chat" x1="0" y1="0" x2="1" y2="1"><stop offset="0" stopColor="#8f6ab8" /><stop offset="1" stopColor="#4a52c0" /></linearGradient></defs><path d="M15 1a14 14 0 1 1-6 26.500L1.500 29l1.300-7A14 14 0 0 1 15 1z" fill="url(#chat)" /><rect x="7" y="9.500" width="11" height="11" rx="2" fill="#fff" /><path d="M19.500 13.500l4.500-3v9l-4.500-3z" fill="#fff" /></svg>
        </AppButton>
        <AppButton>
          <svg width="31" height="31" viewBox="0 0 31 31"><defs><linearGradient id="edge" x1="0" y1="0" x2="1" y2=".300"><stop offset="0" stopColor="#1b9de2" /><stop offset=".550" stopColor="#36c1d0" /><stop offset="1" stopColor="#62d653" /></linearGradient></defs><circle cx="15.500" cy="15.500" r="15" fill="#1470c4" /><path d="M.600 14Q2 1 15.500 .500 30 1 30.500 13q-.500 7-7 7.500-6 0-5-3.500 2-4-2-6.500-6-3-11.500 1-3 2-4.400 4.500z" fill="url(#edge)" /><path d="M11 13q-5 9 2 14.500 7 4.500 14-3.500-7 3-11.500-1-4-4-1.500-9z" fill="#0d4a8c" /><path d="M17 13.500q3.500 1.500 1.500 4.500 .500 3.500 5 3.200 4 0 6-1.700-1 3-3 4.500-6 2.500-10-.500-4-4 .500-10z" fill="#dce6fa" /></svg>
        </AppButton>
        <AppButton $mark="dot">
          <svg width="30" height="28"><path d="M0 2q0-2 2-2h8l3 4h15q2 0 2 2v19H0z" fill="#e8a514" /><path d="M0 7h12l3-3h15v21q0 2-2 2H2q-2 0-2-2z" fill="#fccf45" /><path d="M5 28v-5q0-3 3-3h14q3 0 3 3v5z" fill="#1273c8" /><path d="M9 23.500h12" stroke="#0b4d91" strokeWidth="1.500" /></svg>
        </AppButton>
        <AppButton>
          <svg width="30" height="28"><path d="M0 9L15 0l15 9v9H0z" fill="#0f5aa8" /><path d="M3 9h24v9H3z" fill="#f4f6fa" /><path d="M0 9l15 11L30 9v19H0z" fill="#1f9be6" /><path d="M30 9v19H2z" fill="#3cc0f2" /><path d="M0 28L15 18l15 10z" fill="#1a8fdd" /></svg>
        </AppButton>
        <AppButton>
          <svg width="30" height="30"><path d="M0 0h30v30H0z" fill="#0096d8" /><path d="M10 12V8.500h8V12M7.500 18V12h13v2M10 16h6v6h-6zM11.500 18h3M11.500 20h3M18 14h4.500v8.500H18zM19 16.500h2.500M19 19h2.500" fill="none" stroke="#fff" strokeWidth="1" /></svg>
        </AppButton>
        <AppButton $mark="dot">
          <svg width="30" height="30" viewBox="0 0 30 30"><circle cx="15" cy="15" r="15" fill="#f9c52b" /><path d="M2 7.500A15 15 0 0 1 28 7.500L15 8 9 19z" fill="#e33b2e" /><path d="M2 7.500A15 15 0 0 0 14 30l6.500-11.500L9 18.500z" fill="#2ea04c" /><circle cx="15" cy="15" r="7.200" fill="#fff" /><circle cx="15" cy="15" r="5.700" fill="#3b7ded" /></svg>
        </AppButton>
        <AppButton $mark="active"><ActiveTile><WhiteTile><TableauMark size={26} mono /></WhiteTile></ActiveTile></AppButton>
        <AppButton $mark="dot">
          <svg width="28" height="28"><rect width="28" height="28" rx="5" fill="#b30b00" /><path d="M6 21q5-3 7.500-9 1.500-5 .300-6.500-1.800-.500-1.500 2 1 6 6.500 9 4 2 4.500.800.300-1.800-4.500-1.500-7 .500-12 3.500-2.500 2-1.500 2.500 1.500.300 4-4" fill="none" stroke="#fff" strokeWidth="1.500" /></svg>
        </AppButton>
        <Tray>
          <svg width="17" height="10" fill="none" stroke="#222" strokeWidth="1.500"><path d="M1 9l7.500-7.500L16 9" /></svg>
          <svg width="22" height="20" viewBox="0 0 22 20"><path d="M4 14a4 4 0 0 1 0-7.500A6 6 0 0 1 15 5a5 5 0 0 1 3 8z" fill="#8a8a8a" stroke="#222" strokeWidth="1.400" /><circle cx="15" cy="14" r="5.500" fill="#e8f0fa" /><path d="M11.500 13a3.700 3.700 0 0 1 6.500-1.500v-2M18.500 15a3.700 3.700 0 0 1-6.500 1.500v2" fill="none" stroke="#1670c5" strokeWidth="1.400" /></svg>
          <Lang>ENG<br />US</Lang>
          <TrayIcons>
            <svg width="20" height="18" fill="none" stroke="#222" strokeWidth="1.400"><path d="M1 7q9-9 18 0M4 10.500q6-6 12 0M7 13.500q3-3 6 0" /><circle cx="10" cy="15.500" r="1" fill="#222" /></svg>
            <svg width="20" height="18" fill="none" stroke="#222" strokeWidth="1.300"><path d="M1 6.500h3L8 3v12l-4-3.500H1zM10.500 6.500q2 2.500 0 5M13 4.500q3.500 4.500 0 9" /><path d="M15.500 2.500q5 6.500 0 13" stroke="#aaa" /></svg>
            <svg width="21" height="18" fill="none" stroke="#222" strokeWidth="1.400"><rect x="1" y="3.500" width="16" height="11" rx="2.500" /><rect x="3.500" y="6" width="6.500" height="6" fill="#222" stroke="none" /><path d="M19 7v4" strokeWidth="2" /></svg>
          </TrayIcons>
          <Clock>23:30<br />16-11-2022</Clock>
          <Badge>2</Badge>
        </Tray>
      </Taskbar>
    </Screen>
  );
}
